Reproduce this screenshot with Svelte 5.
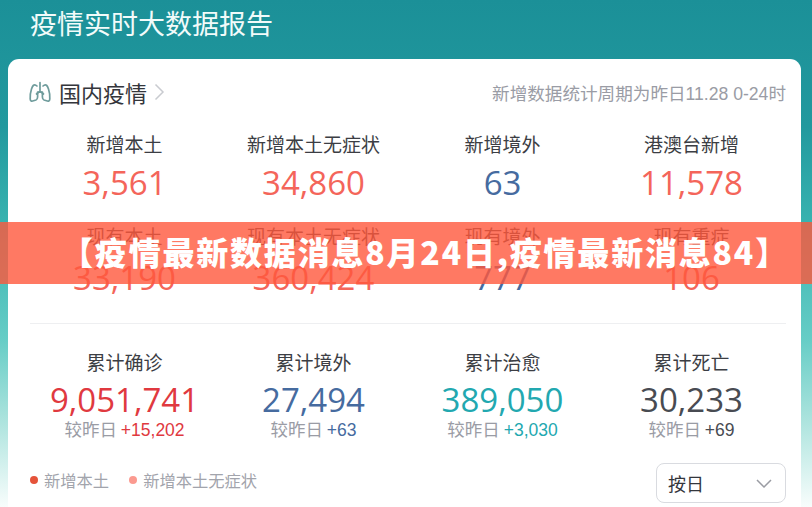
<script>
	const today = [
		{ label: '新增本土', value: '3,561', tone: 'coral' },
		{ label: '新增本土无症状', value: '34,860', tone: 'coral' },
		{ label: '新增境外', value: '63', tone: 'blue' },
		{ label: '港澳台新增', value: '11,578', tone: 'coral' }
	];
	const current = [
		{ label: '现有本土', value: '33,190', tone: 'coral' },
		{ label: '现有本土无症状', value: '360,424', tone: 'coral' },
		{ label: '现有境外', value: '777', tone: 'blue' },
		{ label: '现有重症', value: '106', tone: 'coral' }
	];
	const totals = [
		{ label: '累计确诊', value: '9,051,741', delta: '+15,202', tone: 'red' },
		{ label: '累计境外', value: '27,494', delta: '+63', tone: 'blue' },
		{ label: '累计治愈', value: '389,050', delta: '+3,030', tone: 'teal' },
		{ label: '累计死亡', value: '30,233', delta: '+69', tone: 'dark' }
	];
</script>

<div class="page">
	<h1>疫情实时大数据报告</h1>

	<section class="card">
		<header class="card-head">
			<div class="card-title">
				<svg class="lungs" viewBox="0 0 22 22" width="22" height="22" fill="none" stroke="#6f9c9c" stroke-width="1.700" stroke-linecap="round" stroke-linejoin="round">
					<path d="M11 1.500V10M11 10L7.500 13M11 10L14.500 13" />
					<path d="M8 5C5 2 3.500 5 2.500 8C1.500 11 1 15 1.200 18C1.300 20 2.500 20.500 4.500 19.800L7 19C8.300 18.500 8.600 17.500 8.600 16V11" />
					<path d="M14 5C17 2 18.500 5 19.500 8C20.500 11 21 15 20.800 18C20.700 20 19.500 20.500 17.500 19.800L15 19C13.700 18.500 13.400 17.500 13.400 16V11" />
				</svg>
				<span class="name">国内疫情</span>
				<svg class="chevron" viewBox="0 0 11 18" width="11" height="18" fill="none" stroke="#c9cbd0" stroke-width="1.500">
					<path d="M1.500 1.500L9 9L1.500 16.500" />
				</svg>
			</div>
			<span class="note">新增数据统计周期为昨日11.28 0-24时</span>
		</header>

		<div class="stats first">
			{#each today as s}
				<div class="stat">
					<span class="label">{s.label}</span>
					<span class="value {s.tone}">{s.value}</span>
				</div>
			{/each}
		</div>

		<div class="stats second">
			{#each current as s}
				<div class="stat">
					<span class="label">{s.label}</span>
					<span class="value {s.tone}">{s.value}</span>
				</div>
			{/each}
		</div>

		<hr />

		<div class="stats third">
			{#each totals as s}
				<div class="stat">
					<span class="label">{s.label}</span>
					<span class="value {s.tone}">{s.value}</span>
					<span class="delta">较昨日 <b class={s.tone}>{s.delta}</b></span>
				</div>
			{/each}
		</div>

		<footer class="card-foot">
			<div class="legend">
				<span class="key"><i class="dot strong"></i>新增本土</span>
				<span class="key"><i class="dot soft"></i>新增本土无症状</span>
			</div>
			<div class="select">
				<span>按日</span>
				<svg viewBox="0 0 16 9" width="16" height="9" fill="none" stroke="#9a9ca3" stroke-width="1.500">
					<path d="M1 1L8 8L15 1" />
				</svg>
			</div>
		</footer>
	</section>

	<div class="banner">【疫情最新数据消息8月24日,疫情最新消息84】</div>
</div>

<style>
	:global(body) {
		margin: 0;
	}

	.page {
		position: relative;
		box-sizing: border-box;
		width: 812px;
		height: 507px;
		overflow: hidden;
		padding: 0 11px 0 8px;
		background: linear-gradient(180deg, #1b9098 0%, #22999e 25%, #38b3b0 44%, #66cdc6 67%, #a8e2dc 82%, #f8fdfc 100%);
		font-family: "Noto Sans CJK SC", sans-serif;
	}

	h1 {
		margin: 0;
		height: 59px;
		padding: 4px 0 0 22px;
		box-sizing: border-box;
		color: #f2fbfa;
		font-size: 27px;
		line-height: 38px;
		font-weight: 400;
	}

	.card {
		box-sizing: border-box;
		height: 448px;
		padding: 0 15px 0 22px;
		background: #fff;
		border-radius: 11px 11px 0 0;
	}

	.card-head {
		display: flex;
		justify-content: space-between;
		align-items: center;
		height: 66px;
	}

	.card-title {
		display: flex;
		align-items: center;
		margin-left: -1px;
	}

	.lungs {
		margin-right: 8px;
	}

	.name {
		color: #34363c;
		font-size: 22px;
	}

	.chevron {
		margin-left: 7px;
	}

	.note {
		color: #9a9ca5;
		font-size: 17.600px;
		font-family: "Liberation Sans", "Noto Sans CJK SC", sans-serif;
		white-space: nowrap;
	}

	.stats {
		display: grid;
		grid-template-columns: repeat(4, 189px);
	}

	.first {
		margin-top: 5px;
	}

	.second {
		margin-top: 17px;
	}

	.second .value {
		margin-top: 6px;
	}

	.third {
		margin-top: 24px;
	}

	.stat {
		display: flex;
		flex-direction: column;
		align-items: center;
	}

	.label {
		color: #3c3e44;
		font-size: 19px;
		line-height: 28px;
	}

	.value {
		font-family: "Open Sans", sans-serif;
		font-size: 33px;
		line-height: 44px;
		margin-top: 3px;
	}

	.third .value {
		margin-top: 2px;
	}

	.delta {
		margin-top: -6px;
		color: #9a9ca5;
		font-size: 17.500px;
		line-height: 26px;
	}

	.delta b {
		font-family: "Liberation Sans", sans-serif;
		font-weight: 400;
		font-size: 17.500px;
	}

	.coral {
		color: #f4655a;
	}

	.blue {
		color: #466b9f;
	}

	.red {
		color: #e0393f;
	}

	.teal {
		color: #22a8b0;
	}

	.dark {
		color: #484b52;
	}

	hr {
		margin: 23px 0 0;
		border: 0;
		border-top: 1px solid #eeeff1;
	}

	.card-foot {
		display: flex;
		justify-content: space-between;
		align-items: flex-start;
		margin-top: 20px;
	}

	.legend {
		display: flex;
		gap: 20px;
		margin-top: 5px;
		color: #a2a4ac;
		font-size: 16.300px;
		line-height: 24px;
	}

	.key {
		display: flex;
		align-items: center;
		gap: 6px;
	}

	.dot {
		width: 8px;
		height: 8px;
		border-radius: 50%;
	}

	.strong {
		background: #e5533a;
	}

	.soft {
		background: #fb9a90;
	}

	.select {
		box-sizing: border-box;
		display: flex;
		justify-content: space-between;
		align-items: center;
		width: 130px;
		height: 40px;
		padding: 0 13px 0 11px;
		border: 1px solid #d9dbe0;
		border-radius: 8px;
		color: #34363c;
		font-size: 18px;
	}

	.banner {
		position: absolute;
		left: 0;
		right: 0;
		top: 222px;
		height: 62px;
		padding-left: 38px;
		box-sizing: border-box;
		background: rgba(255, 87, 60, 0.8);
		color: #fff;
		font-size: 32px;
		font-weight: 900;
		line-height: 58px;
		text-align: center;
		white-space: nowrap;
		letter-spacing: 1.800px;
	}
</style>
